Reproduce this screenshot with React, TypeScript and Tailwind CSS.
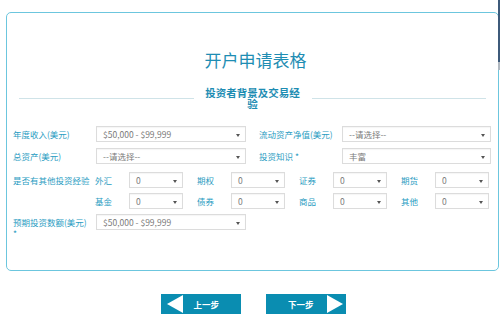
import React from "react";

const font = { fontFamily: '"Noto Sans CJK SC", "Noto Sans", sans-serif' };

function Caret() {
  return (
    <svg width="4" height="3" viewBox="0 0 4 3" className="absolute right-[5px] top-[7px]">
      <path d="M0 0 L4 0 L2 3 Z" fill="#555" />
    </svg>
  );
}

function Select({ w, text }: { w: string; text: string }) {
  return (
    <div className={`relative h-[16px] ${w} border border-[#dcdcdc] bg-white text-[8.5px] leading-[14px] text-[#7a7a7a] pl-[6px] shadow-[inset_0_1px_1px_rgba(0,0,0,0.04)]`}>
      {text}
      <Caret />
    </div>
  );
}

function Label({ w, children }: { w: string; children: React.ReactNode }) {
  return <div className={`${w} shrink-0 whitespace-nowrap text-[8.5px] leading-[16px] text-[#2a9cc2]`}>{children}</div>;
}

function SmallPair({ label, gap }: { label: string; gap?: boolean }) {
  return (
    <div className={`flex items-center ${gap ? "ml-[14px]" : ""}`}>
      <Label w="w-[34px]">{label}</Label>
      <Select w="w-[54px]" text="0" />
    </div>
  );
}

export default function App() {
  return (
    <div className="relative w-[500px] h-[325px] bg-white overflow-hidden" style={font}>
      <div className="absolute right-0 top-0 w-[2px] h-[62px] bg-[#3d5a7a]" />
      <div className="absolute right-0 top-[62px] w-[2px] h-[8px] bg-[#b0b8c0]" />
      <div className="ml-[6px] mt-[12px] w-[493px] h-[259px] border border-[#6cc6de] rounded-[5px] flex flex-col">
        <div className="pt-[36px] pl-[6px] text-center text-[17px] leading-[22px] text-[#1e8db3]">
          开户申请表格
        </div>
        <div className="mt-[16px] flex items-center px-[12px]">
          <div className="flex-1 h-0 border-t border-[#cfe3e8]" />
          <div className="w-[118px] text-center text-[10.5px] font-bold leading-[11px] text-[#1e8db3] px-[9px]">
            投资者背景及交易经验
          </div>
          <div className="flex-1 h-0 border-t border-[#cfe3e8]" />
        </div>
        <div className="mt-[17px] pl-[6px] flex flex-col">
          <div className="flex items-center">
            <Label w="w-[83px]">年度收入(美元)</Label>
            <Select w="w-[150px]" text="$50,000 - $99,999" />
            <div className="w-[13px]" />
            <Label w="w-[83px]">流动资产净值(美元)</Label>
            <Select w="w-[149px]" text="--请选择--" />
          </div>
          <div className="flex items-center mt-[6px]">
            <Label w="w-[83px]">总资产(美元)</Label>
            <Select w="w-[150px]" text="--请选择--" />
            <div className="w-[13px]" />
            <Label w="w-[83px]">投资知识 *</Label>
            <Select w="w-[149px]" text="丰富" />
          </div>
          <div className="flex items-center mt-[8px]">
            <Label w="w-[82px]">是否有其他投资经验</Label>
            <SmallPair label="外汇" />
            <SmallPair label="期权" gap />
            <SmallPair label="证券" gap />
            <SmallPair label="期货" gap />
          </div>
          <div className="flex items-center mt-[5px]">
            <div className="w-[82px] shrink-0" />
            <SmallPair label="基金" />
            <SmallPair label="债券" gap />
            <SmallPair label="商品" gap />
            <SmallPair label="其他" gap />
          </div>
          <div className="flex items-start mt-[5px]">
            <div className="w-[83px] shrink-0 text-[8.5px] leading-[11px] text-[#2a9cc2] pt-[3px]">
              <div className="whitespace-nowrap">预期投资数额(美元)</div>
              <div>*</div>
            </div>
            <Select w="w-[150px]" text="$50,000 - $99,999" />
          </div>
        </div>
      </div>
      <div className="mt-[23px] flex justify-center gap-[25px] pl-[6px]">
        <div className="w-[80px] h-[20px] bg-[#0a8db1] flex items-center">
          <svg width="18" height="18" viewBox="0 0 18 18" className="ml-[6px]">
            <path d="M0 9 L16 0 L16 18 Z" fill="#ffffff" />
          </svg>
          <span className="ml-[9px] text-[8.5px] font-bold text-white">上一步</span>
        </div>
        <div className="w-[80px] h-[20px] bg-[#0a8db1] flex items-center justify-end">
          <span className="mr-[11px] text-[8.5px] font-bold text-white">下一步</span>
          <svg width="18" height="18" viewBox="0 0 18 18" className="mr-[3px]">
            <path d="M2 0 L18 9 L2 18 Z" fill="#ffffff" />
          </svg>
        </div>
      </div>
    </div>
  );
}
